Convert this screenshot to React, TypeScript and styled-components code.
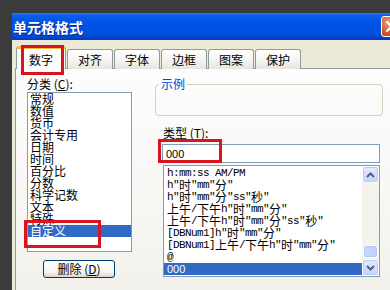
import React from 'react';
import styled, { createGlobalStyle } from 'styled-components';

const CJK = '"Noto Sans CJK SC", "Noto Sans", sans-serif';

const GlobalStyle = createGlobalStyle`
  html, body {
    margin: 0;
    padding: 0;
    background: #3b3b3b;
  }
  #root {
    width: 390px;
    height: 290px;
    overflow: hidden;
  }
`;

const categories = ['常规', '数值', '货币', '会计专用', '日期', '时间', '百分比', '分数', '科学记数', '文本', '特殊', '自定义'];

const formats = [
  'h:mm:ss AM/PM',
  'h"时"mm"分"',
  'h"时"mm"分"ss"秒"',
  '上午/下午h"时"mm"分"',
  '上午/下午h"时"mm"分"ss"秒"',
  '[DBNum1]h"时"mm"分"',
  '[DBNum1]上午/下午h"时"mm"分"',
  '@',
];

const tabs = ['数字', '对齐', '字体', '边框', '图案', '保护'];

// CJK runs get a full-width glyph, like SimSun does next to half-width latin
const withCjk = (text: string) =>
  text.split(/([\u4e00-\u9fff]+)/).map((part, i) =>
    /[\u4e00-\u9fff]/.test(part) ? <Cjk key={i}>{part}</Cjk> : part
  );

export default function App() {
  return (
    <>
      <GlobalStyle />
      <Screen>
        <Dialog>
          <TitleBar>
            <Title>单元格格式</Title>
            <CloseButton>
              <svg width="19" height="19" viewBox="0 0 19 19">
                <path d="M5 5 L14 14 M14 5 L5 14" stroke="#fff" strokeWidth="2.2" strokeLinecap="round" />
              </svg>
            </CloseButton>
          </TitleBar>

          <TabRow>
            {tabs.map((t, i) => (
              <Tab key={t} active={i === 0}>
                {t}
                {i === 0 && <RedMark style={{ left: 4, top: -4, width: 43, height: 30 }} />}
              </Tab>
            ))}
          </TabRow>

          <Panel>
            <LeftCol>
              <FieldLabel>
                分类 (<u>C</u>):
              </FieldLabel>
              <CategoryList>
                {categories.map((c) => (
                  <CategoryItem key={c} selected={c === '自定义'}>
                    {c}
                  </CategoryItem>
                ))}
              </CategoryList>
              <DeleteButton>
                删除 (<u>D</u>)
              </DeleteButton>
              <RedMark style={{ left: -3, top: 143, width: 77, height: 28 }} />
            </LeftCol>

            <RightCol>
              <Sample>
                <SampleLegend>示例</SampleLegend>
                <SampleBody />
              </Sample>
              <TypeLabel>
                类型 (<u>T</u>):
              </TypeLabel>
              <TypeInput>000</TypeInput>
              <FormatList>
                <Rows>
                  {formats.map((f) => (
                    <FormatRow key={f}>{withCjk(f)}</FormatRow>
                  ))}
                  <FormatRow selected>000</FormatRow>
                </Rows>
                <ScrollBar>
                  <ScrollButton>
                    <svg width="9" height="6" viewBox="0 0 9 6">
                      <path d="M1 5 L4.5 1.5 L8 5" fill="none" stroke="#4d6185" strokeWidth="2" />
                    </svg>
                  </ScrollButton>
                  <Track>
                    <Thumb />
                  </Track>
                  <ScrollButton>
                    <svg width="9" height="6" viewBox="0 0 9 6">
                      <path d="M1 1 L4.5 4.5 L8 1" fill="none" stroke="#4d6185" strokeWidth="2" />
                    </svg>
                  </ScrollButton>
                </ScrollBar>
              </FormatList>
              <RedMark style={{ left: 3, top: 62, width: 64, height: 24 }} />
            </RightCol>
          </Panel>
        </Dialog>
      </Screen>
    </>
  );
}

const Screen = styled.div`
  width: 390px;
  height: 290px;
  overflow: hidden;
  box-sizing: border-box;
  padding: 13px 0 0 12px;
  background: #3b3b3b;
  font-family: ${CJK};
  font-size: 12px;
  color: #000;
`;

const Dialog = styled.div`
  width: 392px;
  height: 290px;
  background: #ece9d8;
  display: flex;
  flex-direction: column;
`;

const TitleBar = styled.div`
  flex: none;
  height: 27px;
  display: flex;
  align-items: center;
  justify-content: space-between;
  padding: 0 2px 0 1px;
  background: linear-gradient(
    to bottom,
    #2a78f4 0%,
    #0a5ded 10%,
    #0054e6 30%,
    #0050e0 75%,
    #0044cc 92%,
    #003ab8 100%
  );
`;

const Title = styled.span`
  color: #fff;
  font-weight: bold;
  font-size: 14px;
  line-height: 16px;
  text-shadow: 1px 1px 0 #0a2a8c;
`;

const CloseButton = styled.div`
  width: 21px;
  height: 21px;
  box-sizing: border-box;
  border: 1px solid #fff;
  border-radius: 3px;
  background: radial-gradient(circle at 35% 30%, #f09a7c, #d2512c 60%, #b83a18);
  display: flex;
  align-items: center;
  justify-content: center;
`;

const TabRow = styled.div`
  flex: none;
  height: 23px;
  margin-top: 6px;
  padding-left: 4px;
  display: flex;
  align-items: flex-end;
  gap: 1px;
`;

const Tab = styled.div<{ active?: boolean }>`
  position: relative;
  z-index: ${(p) => (p.active ? 1 : 0)};
  box-sizing: border-box;
  width: ${(p) => (p.active ? 50 : 46)}px;
  height: ${(p) => (p.active ? 23 : 20)}px;
  padding-top: ${(p) => (p.active ? 2 : 0)}px;
  display: flex;
  align-items: center;
  justify-content: center;
  border: 1px solid #919b9c;
  border-bottom: none;
  border-top: ${(p) => (p.active ? '3px solid #f6b83a' : '1px solid #919b9c')};
  border-radius: 3px 3px 0 0;
  background: ${(p) => (p.active ? '#fcfcfe' : 'linear-gradient(to bottom, #ffffff, #f3f3ef 60%, #e6e5de)')};
  font-size: 12px;
  line-height: 14px;
`;

const Panel = styled.div`
  flex: 1;
  margin: -1px 0 0 3px;
  border: 1px solid #919b9c;
  border-right: none;
  border-bottom: none;
  background: linear-gradient(to bottom, #fdfdfe, #f6f5f1 70%, #f1efe8);
  display: grid;
  grid-template-columns: 105px 228px;
  column-gap: 23px;
  align-items: start;
  padding: 8px 0 0 11px;
`;

const LeftCol = styled.div`
  position: relative;
  display: flex;
  flex-direction: column;
`;

const FieldLabel = styled.div`
  height: 14px;
  line-height: 14px;
  margin-bottom: 1px;
`;

const CategoryList = styled.div`
  height: 160px;
  box-sizing: border-box;
  border: 1px solid #7f9db9;
  background: #fff;
  overflow: hidden;
`;

const CategoryItem = styled.div<{ selected?: boolean }>`
  height: 12px;
  line-height: 12px;
  padding-left: 2px;
  white-space: nowrap;
  background: ${(p) => (p.selected ? '#316ac5' : 'transparent')};
  color: ${(p) => (p.selected ? '#fff' : '#000')};
`;

const DeleteButton = styled.div`
  margin: 8px 0 0 16px;
  width: 72px;
  height: 18px;
  box-sizing: border-box;
  border: 1px solid #003c74;
  border-radius: 3px;
  background: linear-gradient(to bottom, #ffffff, #f4f4f0 70%, #d8d4c8);
  display: flex;
  align-items: center;
  justify-content: center;
  line-height: 14px;
`;

const RightCol = styled.div`
  position: relative;
  display: flex;
  flex-direction: column;
`;

const Sample = styled.fieldset`
  margin: 0;
  padding: 0 0 0 3px;
  min-width: 0;
  border: 1px solid #d0d0bf;
  border-radius: 4px;
`;

const SampleLegend = styled.legend`
  padding: 0 2px;
  color: #0046d5;
  font-size: 12px;
  line-height: 14px;
`;

const SampleBody = styled.div`
  height: 24px;
`;

const TypeLabel = styled.div`
  margin: 10px 0 0 8px;
  height: 14px;
  line-height: 14px;
`;

const TypeInput = styled.div`
  margin: 4px 0 0 7px;
  width: 218px;
  height: 19px;
  box-sizing: border-box;
  border: 1px solid #7f9db9;
  background: #fff;
  padding-left: 3px;
  display: flex;
  align-items: center;
  font-family: 'Liberation Sans', Arial, sans-serif;
  font-size: 11px;
`;

const FormatList = styled.div`
  margin: 2px 0 0 8px;
  width: 217px;
  height: 112px;
  box-sizing: border-box;
  border: 1px solid #7f9db9;
  background: #fff;
  display: flex;
`;

const Rows = styled.div`
  flex: 1;
  padding-top: 1px;
  overflow: hidden;
`;

const FormatRow = styled.div<{ selected?: boolean }>`
  height: 12px;
  line-height: 12px;
  padding-left: 3px;
  white-space: nowrap;
  font-family: ${(p) => (p.selected ? "'Liberation Sans', Arial, sans-serif" : "'Liberation Mono', 'Courier New', monospace")};
  font-size: 11px;
  letter-spacing: ${(p) => (p.selected ? 0 : -0.6)}px;
  background: ${(p) => (p.selected ? '#316ac5' : 'transparent')};
  color: ${(p) => (p.selected ? '#fff' : '#000')};
`;

const Cjk = styled.span`
  font-family: ${CJK};
  font-size: 12px;
  letter-spacing: 0;
  line-height: 12px;
  vertical-align: top;
`;

const ScrollBar = styled.div`
  width: 17px;
  display: flex;
  flex-direction: column;
  background: #f3f2ec;
`;

const ScrollButton = styled.div`
  height: 17px;
  box-sizing: border-box;
  border: 1px solid #fff;
  border-radius: 3px;
  background: linear-gradient(to bottom, #e3ebfd, #c4d4fa);
  box-shadow: inset 0 0 0 1px #b9cbf5;
  display: flex;
  align-items: center;
  justify-content: center;
`;

const Track = styled.div`
  flex: 1;
  display: flex;
  flex-direction: column;
  justify-content: flex-end;
  padding-bottom: 1px;
`;

const Thumb = styled.div`
  height: 11px;
  margin: 0 1px;
  border-radius: 3px;
  border: 1px solid #fff;
  box-shadow: inset 0 0 0 1px #b3c7f4;
  background: linear-gradient(to right, #cbd9fc, #bccffa);
`;

const RedMark = styled.div`
  position: absolute;
  box-sizing: border-box;
  border: 3px solid #d8151c;
  pointer-events: none;
`;
